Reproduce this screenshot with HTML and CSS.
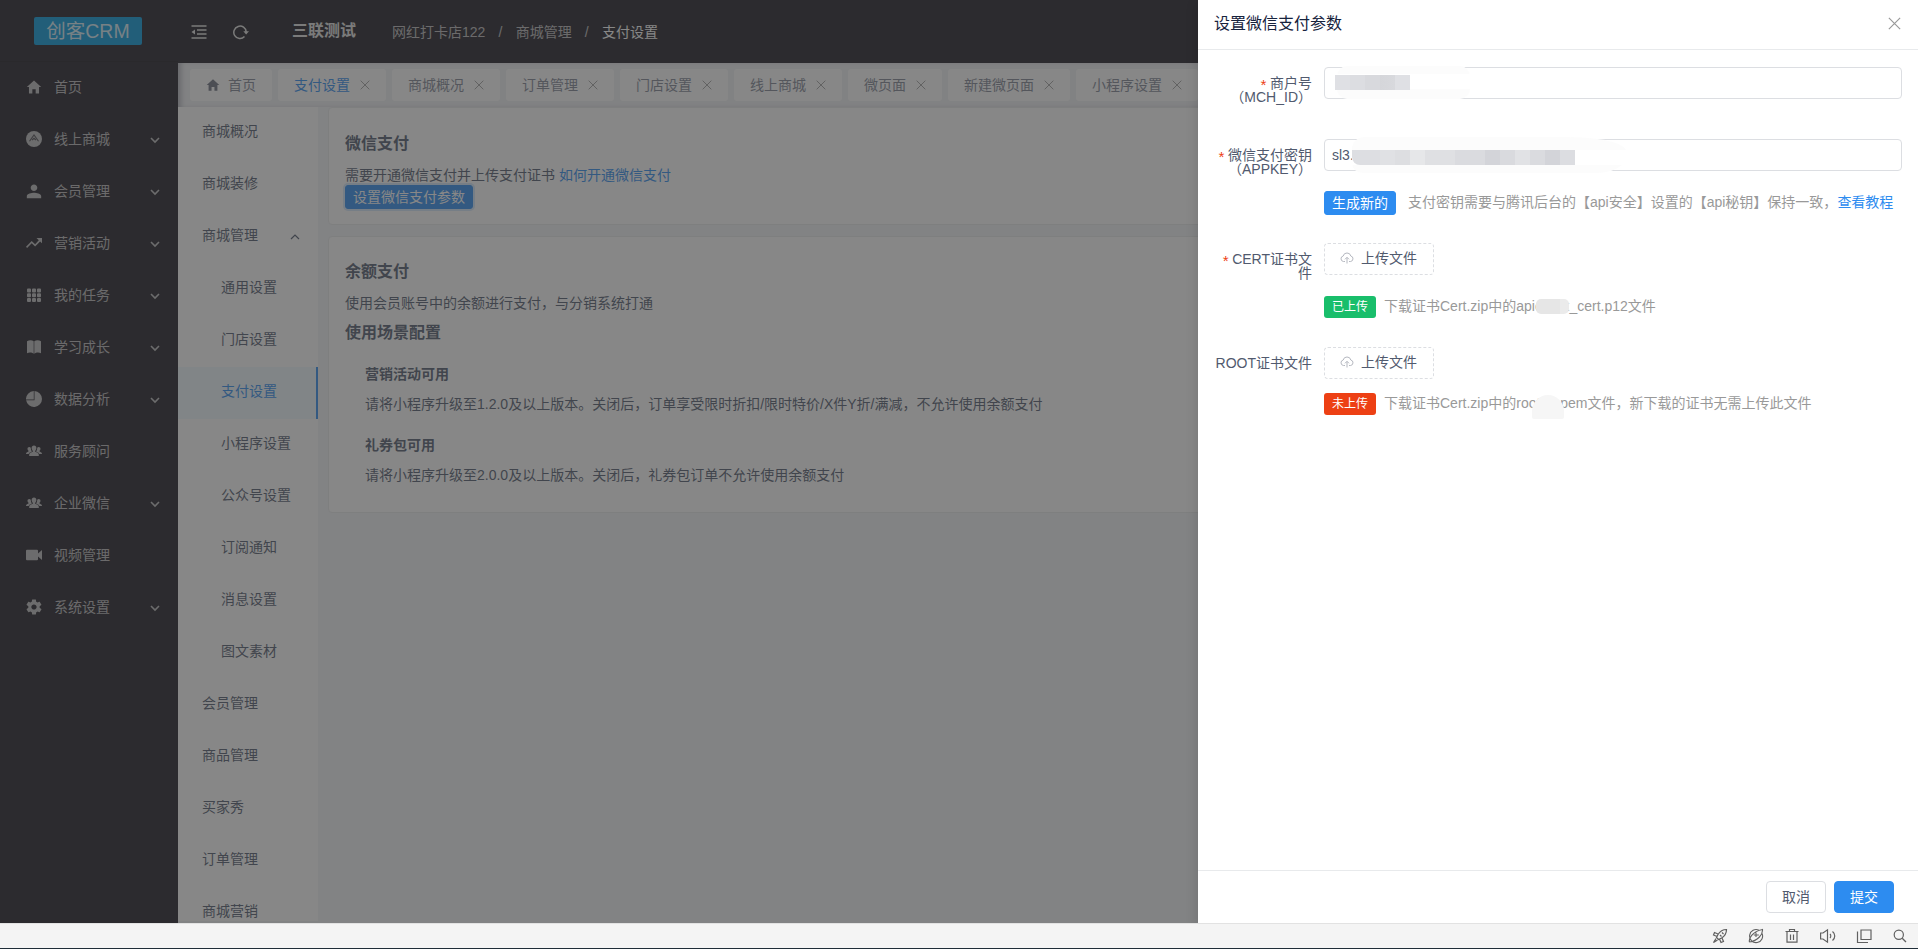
FILE: index.html
```html
<!DOCTYPE html>
<html lang="zh-CN">
<head>
    <meta charset="UTF-8" />
    <meta name="viewport" content="width=device-width, initial-scale=1.0"/>
    <title>创客CRM - 支付设置</title>
    <link rel="stylesheet" href="styles.css">
</head>
<body>
    <!-- icon sprite -->
    <svg class="sprite" xmlns="http://www.w3.org/2000/svg">
        <symbol id="i-home" viewBox="24 24 464 464"><path d="M208 448V320h96v128h98V256h62L256 64 48 256h62v192z"/></symbol>
        <symbol id="i-shop" viewBox="0 0 16 16"><circle cx="8" cy="8" r="8"/><path d="M3.500 10.300 8 4l4.500 6.300M6 9l2-1.700L10 9" fill="none" stroke="#242229" stroke-opacity=".75" stroke-width="1.100"/></symbol>
        <symbol id="i-user" viewBox="24 24 464 464"><path d="M256 256c53 0 96-43 96-96s-43-96-96-96-96 43-96 96 43 96 96 96zm0 48c-64 0-208 32-208 96v64h416v-64c0-64-144-96-208-96z"/></symbol>
        <symbol id="i-trend" viewBox="0 0 16 16"><path d="M10.500 3H16v5.200l-1.900-1.800-5 5L5.700 8.200 1.100 13 0 11.800l5.700-5.900L9.100 9.200l3.700-4z"/></symbol>
        <symbol id="i-grid" viewBox="0 0 16 16"><path d="M1 2.500a1 1 0 0 1 1-1h2a1 1 0 0 1 1 1v2a1 1 0 0 1-1 1H2a1 1 0 0 1-1-1zm5 0a1 1 0 0 1 1-1h2a1 1 0 0 1 1 1v2a1 1 0 0 1-1 1H7a1 1 0 0 1-1-1zm5 0a1 1 0 0 1 1-1h2a1 1 0 0 1 1 1v2a1 1 0 0 1-1 1h-2a1 1 0 0 1-1-1zM1 7.300a1 1 0 0 1 1-1h2a1 1 0 0 1 1 1v2a1 1 0 0 1-1 1H2a1 1 0 0 1-1-1zm5 0a1 1 0 0 1 1-1h2a1 1 0 0 1 1 1v2a1 1 0 0 1-1 1H7a1 1 0 0 1-1-1zm5 0a1 1 0 0 1 1-1h2a1 1 0 0 1 1 1v2a1 1 0 0 1-1 1h-2a1 1 0 0 1-1-1zM1 12.100a1 1 0 0 1 1-1h2a1 1 0 0 1 1 1v2a1 1 0 0 1-1 1H2a1 1 0 0 1-1-1zm5 0a1 1 0 0 1 1-1h2a1 1 0 0 1 1 1v2a1 1 0 0 1-1 1H7a1 1 0 0 1-1-1zm5 0a1 1 0 0 1 1-1h2a1 1 0 0 1 1 1v2a1 1 0 0 1-1 1h-2a1 1 0 0 1-1-1z"/></symbol>
        <symbol id="i-book" viewBox="0 0 16 16"><path d="M1 2.200C3 1 6 1 7.700 2.200v12.600C6 13.300 3 13.300 1 14.200zM8.300 2.200C10 1 13 1 15 2.200v12c-2-.9-5-.9-6.700.6z"/></symbol>
        <symbol id="i-pie" viewBox="0 0 16 16"><path d="M8.500 0a8 8 0 1 1-8.400 9.300h8.400zM7.800.1v8.500H0A8 8 0 0 1 7.800.1z"/></symbol>
        <symbol id="i-team" viewBox="0 0 16 16"><path d="M8 2.500c1.500 0 2.400 1.100 2.400 2.600 0 1.200-.6 2.200-1.200 2.800v.9c1.600.5 3.600 1.200 3.600 2.900v1.300H3.200v-1.300c0-1.700 2-2.400 3.600-2.900v-.9c-.6-.6-1.200-1.600-1.200-2.800 0-1.500.9-2.600 2.400-2.600zM3.300 4c.6 0 1.100.2 1.500.7 0 1.600.4 2.700 1.200 3.700-1.500.5-2.800 1.100-3.300 2.500H0c0-1.500 1-2 2.500-2.500v-.7C1.900 7.200 1.500 6.600 1.500 5.900 1.500 4.700 2.200 4 3.300 4zm9.400 0c1.100 0 1.800.7 1.800 1.900 0 .7-.4 1.300-1 1.800v.7c1.500.5 2.500 1 2.500 2.500h-2.700c-.5-1.400-1.800-2-3.300-2.500.8-1 1.200-2.100 1.200-3.700.4-.5.9-.7 1.500-.7z"/></symbol>
        <symbol id="i-video" viewBox="0 0 16 16"><path d="M1 2.700h10a1 1 0 0 1 1 1v2.800l4-3.600v10.200l-4-3.600v2.800a1 1 0 0 1-1 1H1a1 1 0 0 1-1-1V3.700a1 1 0 0 1 1-1z"/></symbol>
        <symbol id="i-gear" viewBox="32 32 448 448"><path d="M414 277c1-6 1-14 1-21s-1-14-1-21l45-34c4-3 5-8 2-14l-43-71c-2-4-8-6-13-4l-53 20c-10-8-23-15-36-20l-7-56c-1-4-6-8-11-8h-85c-5 0-10 4-11 8l-8 56c-13 5-25 12-36 20l-53-20c-6-2-11 0-13 4l-43 71c-2 5-1 11 2 14l46 34c0 7-1 14-1 21s1 14 1 21l-45 34c-4 3-5 8-2 14l43 71c2 4 8 6 13 4l53-20c10 8 23 15 36 20l8 56c1 5 6 8 11 8h85c5 0 10-4 11-8l8-56c13-5 25-12 36-20l54 20c5 2 10 0 12-4l43-71c2-5 1-11-2-14zm-159 52c-41 0-74-32-74-73s33-73 74-73 75 32 75 73-33 73-75 73z"/></symbol>
        <symbol id="i-down" viewBox="0 0 10 10"><path d="M1 3l4 4 4-4" fill="none" stroke="currentColor" stroke-width="1.600"/></symbol>
        <symbol id="i-up" viewBox="0 0 10 10"><path d="M1 7l4-4 4 4" fill="none" stroke="currentColor" stroke-width="1.200"/></symbol>
        <symbol id="i-close" viewBox="0 0 12 12"><path d="M.8.8l10.400 10.400M11.200.8.8 11.200" fill="none" stroke="currentColor" stroke-width="1.100"/></symbol>
        <symbol id="i-fold" viewBox="0 0 16 16"><path d="M.5 2h15M6 6h9.500M6 10h9.500M.5 14h15" fill="none" stroke="currentColor" stroke-width="1.500"/><path d="M.5 8 4 5.400v5.200z"/></symbol>
        <symbol id="i-refresh" viewBox="0 0 16 16"><path d="M13.200 8a6.200 6.200 0 1 0-1.700 4.600" fill="none" stroke="currentColor" stroke-width="1.500"/><path d="M10.300 7.300H16l-2.900 3.200z"/></symbol>
        <symbol id="i-upload" viewBox="0 0 14 14"><path d="M5 10.500H3.400A2.800 2.800 0 0 1 3.200 5 3.900 3.900 0 0 1 10.800 5a2.800 2.800 0 0 1-.2 5.500H9M7 12.500V6.500M5 8.300l2-2 2 2" fill="none" stroke="currentColor" stroke-width="1"/></symbol>
        <symbol id="i-rocket" viewBox="0 0 16 16"><path d="M14.500 1.500c-4 0-6.500 1.700-8.500 5L4.500 9.500l2 2L9.600 10c3.200-2 4.900-4.500 4.900-8.500zM6 6 2.500 4.500 1.500 7 5 8.500M10 10l1.500 3.500L9 14.500 7.500 11M4 10.500 1.500 14.500l4-2.500M10 4.500 11.500 6M8 7l1.500 1.500" fill="none" stroke="currentColor" stroke-width="1.200"/></symbol>
        <symbol id="i-speed" viewBox="0 0 16 16"><path d="M13.800 5A6.500 6.500 0 1 1 11 2.300M1.500 14C.5 11 4 3.500 14.500 1.500c.5 5-5 11.500-13 12.500M8 4.500V9M5.800 7h5" fill="none" stroke="currentColor" stroke-width="1.100"/></symbol>
        <symbol id="i-trash" viewBox="0 0 16 16"><path d="M1.500 3.500h13M5.500 3.500v-2h5v2M3 3.500v10.700h10V3.500M6.500 6.500V12M9.500 6.500V12" fill="none" stroke="currentColor" stroke-width="1.200"/></symbol>
        <symbol id="i-sound" viewBox="0 0 16 16"><path d="M.6 5v6H3l4.500 3.200V1.800L3 5zM10 6c1 1 1 3 0 4M12.500 3.500c3 2.500 3 6.500 0 9" fill="none" stroke="currentColor" stroke-width="1.200"/></symbol>
        <symbol id="i-windows" viewBox="0 0 16 16"><path d="M5 2h10v9.500H5zM1.500 3.500v11H12" fill="none" stroke="currentColor" stroke-width="1.200"/></symbol>
        <symbol id="i-search" viewBox="0 0 16 16"><circle cx="6.800" cy="6.800" r="4.600" fill="none" stroke="currentColor" stroke-width="1.200"/><path d="M10.200 10.200 14 14" stroke="currentColor" stroke-width="1.300"/></symbol>
    </svg>

    <div class="app">
        <aside class="sidebar">
            <div class="logo-box"><div class="logo">创客CRM</div></div>
            <ul class="side-menu">
                <li><svg class="icon"><use href="#i-home"/></svg><span>首页</span></li>
                <li><svg class="icon"><use href="#i-shop"/></svg><span>线上商城</span><svg class="arrow"><use href="#i-down"/></svg></li>
                <li><svg class="icon"><use href="#i-user"/></svg><span>会员管理</span><svg class="arrow"><use href="#i-down"/></svg></li>
                <li><svg class="icon"><use href="#i-trend"/></svg><span>营销活动</span><svg class="arrow"><use href="#i-down"/></svg></li>
                <li><svg class="icon"><use href="#i-grid"/></svg><span>我的任务</span><svg class="arrow"><use href="#i-down"/></svg></li>
                <li><svg class="icon"><use href="#i-book"/></svg><span>学习成长</span><svg class="arrow"><use href="#i-down"/></svg></li>
                <li><svg class="icon"><use href="#i-pie"/></svg><span>数据分析</span><svg class="arrow"><use href="#i-down"/></svg></li>
                <li><svg class="icon"><use href="#i-team"/></svg><span>服务顾问</span></li>
                <li><svg class="icon"><use href="#i-team"/></svg><span>企业微信</span><svg class="arrow"><use href="#i-down"/></svg></li>
                <li><svg class="icon"><use href="#i-video"/></svg><span>视频管理</span></li>
                <li><svg class="icon"><use href="#i-gear"/></svg><span>系统设置</span><svg class="arrow"><use href="#i-down"/></svg></li>
            </ul>
        </aside>

        <div class="main">
            <header class="header">
                <svg class="icon"><use href="#i-fold"/></svg>
                <svg class="icon refresh"><use href="#i-refresh"/></svg>
                <h1>三联测试</h1>
                <nav class="breadcrumb">
                    <span>网红打卡店122</span><i>/</i><span>商城管理</span><i>/</i><span class="current">支付设置</span>
                </nav>
            </header>

            <div class="tabs">
                <div class="tab"><svg class="tab-home"><use href="#i-home"/></svg>首页</div>
                <div class="tab active">支付设置<svg class="tab-close"><use href="#i-close"/></svg></div>
                <div class="tab">商城概况<svg class="tab-close"><use href="#i-close"/></svg></div>
                <div class="tab">订单管理<svg class="tab-close"><use href="#i-close"/></svg></div>
                <div class="tab">门店设置<svg class="tab-close"><use href="#i-close"/></svg></div>
                <div class="tab">线上商城<svg class="tab-close"><use href="#i-close"/></svg></div>
                <div class="tab">微页面<svg class="tab-close"><use href="#i-close"/></svg></div>
                <div class="tab">新建微页面<svg class="tab-close"><use href="#i-close"/></svg></div>
                <div class="tab">小程序设置<svg class="tab-close"><use href="#i-close"/></svg></div>
            </div>

            <div class="body">
                <ul class="sub-menu">
                    <li>商城概况</li>
                    <li>商城装修</li>
                    <li>商城管理<svg class="arrow"><use href="#i-up"/></svg></li>
                    <li class="child">通用设置</li>
                    <li class="child">门店设置</li>
                    <li class="child active">支付设置</li>
                    <li class="child">小程序设置</li>
                    <li class="child">公众号设置</li>
                    <li class="child">订阅通知</li>
                    <li class="child">消息设置</li>
                    <li class="child">图文素材</li>
                    <li>会员管理</li>
                    <li>商品管理</li>
                    <li>买家秀</li>
                    <li>订单管理</li>
                    <li>商城营销</li>
                </ul>
                <div class="content">
                    <section class="card wechat">
                        <h2>微信支付</h2>
                        <p>需要开通微信支付并上传支付证书 <a>如何开通微信支付</a></p>
                        <button class="btn btn-primary btn-small focus">设置微信支付参数</button>
                    </section>
                    <section class="card balance">
                        <h2>余额支付</h2>
                        <p>使用会员账号中的余额进行支付，与分销系统打通</p>
                        <h2 class="scene">使用场景配置</h2>
                        <dl>
                            <dt>营销活动可用</dt>
                            <dd>请将小程序升级至1.2.0及以上版本。关闭后，订单享受限时折扣/限时特价/X件Y折/满减，不允许使用余额支付</dd>
                            <dt>礼券包可用</dt>
                            <dd>请将小程序升级至2.0.0及以上版本。关闭后，礼券包订单不允许使用余额支付</dd>
                        </dl>
                    </section>
                </div>
            </div>
        </div>

        <div class="mask"></div>

        <div class="drawer">
            <div class="drawer-header">
                <span>设置微信支付参数</span>
                <svg class="drawer-close"><use href="#i-close"/></svg>
            </div>
            <div class="drawer-body">
                <div class="form-item mch">
                    <label class="required">商户号（MCH_ID）</label>
                    <div class="field">
                        <div class="input">
                            <span class="smear"></span>
                            <span class="mosaic"></span>
                        </div>
                    </div>
                </div>
                <div class="form-item appkey">
                    <label class="required">微信支付密钥（APPKEY）</label>
                    <div class="field">
                        <div class="input">sl3.
                            <span class="smear"></span>
                            <span class="mosaic"></span>
                        </div>
                        <div class="hint key-hint">
                            <button class="btn btn-primary btn-small">生成新的</button>
                            <span>支付密钥需要与腾讯后台的【api安全】设置的【api秘钥】保持一致，<a>查看教程</a></span>
                        </div>
                    </div>
                </div>
                <div class="form-item cert">
                    <label class="required">CERT证书文件</label>
                    <div class="field">
                        <button class="btn upload"><svg><use href="#i-upload"/></svg>上传文件</button>
                        <div class="hint">
                            <span class="tag success">已上传</span>
                            <span>下载证书Cert.zip中的api<b class="hidden-text">client</b>_cert.p12文件</span>
                        </div>
                    </div>
                </div>
                <div class="form-item root">
                    <label>ROOT证书文件</label>
                    <div class="field">
                        <button class="btn upload"><svg><use href="#i-upload"/></svg>上传文件</button>
                        <div class="hint">
                            <span class="tag error">未上传</span>
                            <span>下载证书Cert.zip中的roo<b class="hidden-text">tca.</b>pem文件，新下载的证书无需上传此文件</span>
                        </div>
                    </div>
                </div>
            </div>
            <div class="drawer-footer">
                <button class="btn">取消</button>
                <button class="btn btn-primary">提交</button>
            </div>
        </div>
    </div>

    <footer class="statusbar">
        <svg><use href="#i-rocket"/></svg>
        <svg><use href="#i-speed"/></svg>
        <svg><use href="#i-trash"/></svg>
        <svg><use href="#i-sound"/></svg>
        <svg><use href="#i-windows"/></svg>
        <svg><use href="#i-search"/></svg>
    </footer>
</body>
</html>
```

FILE: styles.css
```css
* {
    box-sizing: border-box;
    margin: 0;
    padding: 0;
}

body {
    font-family: "Liberation Sans", "Noto Sans CJK SC", sans-serif;
    font-size: 14px;
    line-height: 20px;
    color: #515a6e;
    height: 949px;
    overflow: hidden;
    text-spacing-trim: space-all;
}

ul {
    list-style: none;
}

a {
    color: #2d8cf0;
}

svg {
    display: block;
    flex: none;
    fill: currentColor;
}

.sprite {
    display: none;
}

.icon {
    width: 16px;
    height: 16px;
}

.arrow {
    width: 10px;
    height: 10px;
}

.app {
    position: relative;
    display: flex;
    height: 923px;
    overflow: hidden;
}

/* left sidebar */
.sidebar {
    width: 178px;
    background: #1d1b23;
    color: rgba(255, 255, 255, 0.7);
}

.logo-box {
    height: 62px;
    padding: 17px 0 0 34px;
    border-bottom: 1px solid #17151c;
}

.logo {
    width: 108px;
    height: 28px;
    line-height: 28px;
    border-radius: 2px;
    background: #0399dd;
    color: rgba(255, 255, 255, 0.85);
    font-size: 19.5px;
    text-align: center;
}

.side-menu li {
    display: flex;
    align-items: center;
    height: 52px;
    padding: 0 18px 3px 26px;
}

.side-menu span {
    margin-left: 12px;
    flex: 1;
}

.side-menu .arrow {
    margin-top: 3px;
}

/* header */
.main {
    flex: 1;
    display: flex;
    flex-direction: column;
    background: #f3f5f8;
}

.header {
    display: flex;
    align-items: center;
    height: 63px;
    padding-left: 13px;
    background: #1d1b23;
    color: #e0e0e0;
}

.header .refresh {
    margin-left: 26px;
}

.header h1 {
    margin: 0 0 2px 43px;
    font-size: 16px;
}

.breadcrumb {
    display: flex;
    margin-left: 36px;
    color: rgba(255, 255, 255, 0.7);
}

.breadcrumb i {
    margin: 0 13.2px;
    font-style: normal;
}

.breadcrumb .current {
    color: #fff;
}

/* opened pages */
.tabs {
    display: flex;
    gap: 6px;
    height: 44px;
    padding: 6px 12px;
    background: #f0f2f5;
    box-shadow: inset 5px 0 5px -2px rgba(60, 60, 80, 0.35);
    overflow: hidden;
}

.tab {
    display: flex;
    align-items: center;
    flex: none;
    height: 32px;
    padding: 0 16px 1px;
    border-radius: 3px;
    background: #fff;
    color: #808695;
}

.tab.active {
    color: #2d8cf0;
}

.tab-home {
    width: 14px;
    height: 14px;
    margin-right: 8px;
    color: #6b7080;
}

.tab-close {
    width: 10px;
    height: 10px;
    margin: 0 0 0 10px;
    color: #999;
}

.body {
    flex: 1;
    display: flex;
    min-height: 0;
}

.sub-menu {
    width: 140px;
    height: 814px;
    background: #fff;
    overflow: hidden;
}

.sub-menu li {
    display: flex;
    align-items: center;
    justify-content: space-between;
    height: 52px;
    padding: 0 18px 5px 24px;
}

.sub-menu .child {
    padding-left: 43px;
}

.sub-menu .active {
    background: #f0faff;
    border-right: 2px solid #2d8cf0;
    color: #2d8cf0;
}

.sub-menu .arrow {
    margin-top: 5px;
}

/* cards */
.content {
    flex: 1;
    padding: 0 10px;
}

.card {
    padding: 25px 16px;
    border: 1px solid #e8eaec;
    border-radius: 4px;
    background: #fff;
}

.wechat {
    height: 118px;
}

.balance {
    height: 277px;
    margin-top: 11px;
}

.card h2 {
    font-size: 16px;
    line-height: 20px;
    color: #515a6e;
}

.wechat h2 {
    padding-top: 1px;
}

.card p {
    margin-top: 11px;
}

.card .btn {
    display: block;
}

.card .scene {
    margin-top: 10px;
}

.card dl {
    padding: 21px 0 0 20px;
}

.card dt {
    font-weight: bold;
}

.card dd {
    margin: 10px 0 21px;
}

/* buttons */
.btn {
    height: 32px;
    padding: 0 15px;
    border: 1px solid #dcdee2;
    border-radius: 4px;
    background: #fff;
    color: #515a6e;
    font: inherit;
}

.btn-primary {
    border-color: #2d8cf0;
    background: #2d8cf0;
    color: #fff;
}

.btn-small {
    height: 24px;
    padding: 0 7px;
    border-radius: 3px;
    line-height: 20px;
}

.focus {
    box-shadow: 0 0 0 2px rgba(45, 140, 240, 0.2);
}

/* drawer */
.mask {
    position: absolute;
    inset: 0;
    background: rgba(55, 55, 55, 0.6);
}

.drawer {
    position: absolute;
    top: 0;
    right: 0;
    display: flex;
    flex-direction: column;
    width: 720px;
    height: 923px;
    background: #fff;
    box-shadow: 0 4px 12px rgba(0, 0, 0, 0.15);
}

.drawer-header {
    display: flex;
    align-items: center;
    justify-content: space-between;
    height: 50px;
    padding: 0 17px 2px 16px;
    border-bottom: 1px solid #e8eaec;
    font-size: 16px;
    color: #17233d;
}

.drawer-close {
    width: 13px;
    height: 13px;
    color: #999;
}

.drawer-body {
    flex: 1;
    padding: 17px 16px;
}

.form-item {
    display: flex;
}

.mch {
    height: 72px;
}

.appkey,
.cert {
    height: 104px;
}

.form-item label {
    width: 110px;
    padding: 9px 12px 10px 0;
    line-height: 14px;
    text-align: right;
}

.required::before {
    content: "*";
    display: inline-block;
    width: 7px;
    margin-right: 4px;
    font-family: "Liberation Mono", monospace;
    font-size: 15px;
    line-height: 0;
    vertical-align: -3px;
    color: #ed4014;
}

.field {
    flex: 1;
}

.input {
    position: relative;
    height: 32px;
    padding: 0 7px;
    border: 1px solid #dcdee2;
    border-radius: 4px;
    line-height: 30px;
}

/* masked values lie over the inputs */
.smear,
.mosaic {
    position: absolute;
}

.mch .smear {
    left: 12px;
    top: -2px;
    width: 133px;
    height: 33px;
    border-radius: 10px;
    background: linear-gradient(#fcfcfc 8px, #fff 8px, #fff 23px, #fcfcfc 23px);
}

.mch .mosaic {
    left: 10px;
    top: 7px;
    width: 75px;
    height: 15px;
    background: linear-gradient(90deg, #dfe0e4 15px, #dcdde1 15px, #dcdde1 30px, #d8d9dd 30px, #d8d9dd 45px, #d5d6da 45px, #d8d9dd 60px, #dfe0e4 60px);
}

.appkey .smear {
    left: 27px;
    top: -3px;
    width: 274px;
    height: 36px;
    border-radius: 12px 60px 30px 10px / 12px 14px 16px 10px;
    background: linear-gradient(#fcfcfc 13px, #fff 13px, #fff 28px, #fcfcfc 28px);
}

.appkey .mosaic {
    left: 27px;
    top: 10px;
    width: 223px;
    height: 15px;
    border-radius: 0 0 0 8px;
    background: linear-gradient(90deg, #dddee2 28px, #e0e1e4 28px, #e0e1e4 43px, #dddee1 43px, #dddee1 58px, #e6e7e9 58px, #e6e7e9 73px, #dfe0e3 73px, #dfe0e3 103px, #dadbdf 103px, #dadbdf 133px, #d3d4d9 133px, #d3d4d9 148px, #d9dade 148px, #d9dade 163px, #e1e2e5 163px, #e1e2e5 178px, #dadbdf 178px, #dadbdf 193px, #d3d4d9 193px, #d3d4d9 208px, #dcdde1 208px);
}

.hint {
    display: flex;
    align-items: center;
    color: #999;
}

.hint > span:last-child {
    padding-bottom: 2px;
}

.key-hint {
    gap: 12px;
    margin-top: 20px;
    white-space: nowrap;
}

.cert .hint {
    margin-top: 21px;
}

.root .hint {
    margin-top: 14px;
}

.upload {
    display: flex;
    align-items: center;
    width: 110px;
    padding-bottom: 2px;
    border-style: dashed;
}

.upload svg {
    width: 14px;
    height: 14px;
    margin-right: 7px;
    color: #b5b8c0;
}

.tag {
    width: 52px;
    height: 22px;
    margin-right: 8px;
    border-radius: 3px;
    line-height: 22px;
    text-align: center;
    font-size: 12px;
    color: #fff;
}

.success {
    background: #19be6b;
}

.error {
    background: #ed4014;
}

.hidden-text {
    position: relative;
    font-weight: normal;
    letter-spacing: 0.3px;
}

.hidden-text::after {
    content: "";
    position: absolute;
    left: 1px;
    top: 1px;
    width: 33px;
    height: 15px;
    border-radius: 5px;
    background: linear-gradient(90deg, #e6e6e6 24px, #ebebeb 24px);
}

.root .hidden-text::after {
    left: -4px;
    top: 0;
    width: 32px;
    height: 24px;
    border-radius: 16px 16px 2px 2px;
    background: #f6f6f6;
}

.drawer-footer {
    display: flex;
    gap: 8px;
    justify-content: flex-end;
    height: 53px;
    padding: 10px 24px;
    border-top: 1px solid #e8eaec;
}

/* bottom bar */
.statusbar {
    display: flex;
    align-items: center;
    justify-content: flex-end;
    gap: 20px;
    height: 26px;
    padding-right: 10px;
    border-top: 1px solid #e2e2e2;
    border-bottom: 1px solid #1f2d38;
    background: #f4f4f4;
    color: #606060;
}

.statusbar svg {
    width: 16px;
    height: 16px;
}
```
